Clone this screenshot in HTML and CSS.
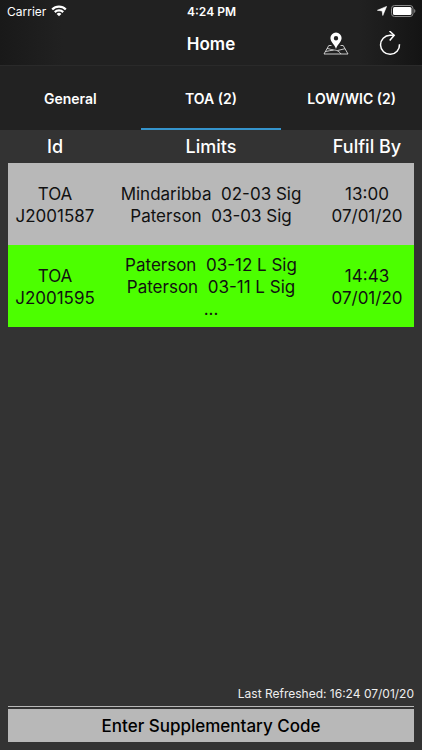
FILE: index.html
```html
<!DOCTYPE html>
<html lang="en">
<head>
    <meta charset="UTF-8">
    <meta name="viewport" content="width=device-width, initial-scale=1.0">
    <title>Home</title>
    <link rel="stylesheet" href="styles.css">
</head>
<body>

<header class="top">
    <div class="status">
        <div class="carrier">
            <span>Carrier</span>
            <svg width="16" height="12" viewBox="0 0 16 12" fill="#fff">
                <path d="M.4 3.7a10.8 10.8 0 0 1 15.2 0L14 5.3a8.6 8.6 0 0 0-12 0z"/>
                <path d="M3 6.3a7.1 7.1 0 0 1 10 0l-1.6 1.6a4.8 4.8 0 0 0-6.8 0z"/>
                <path d="M5.6 8.9a3.4 3.4 0 0 1 4.8 0L8 11.3z"/>
            </svg>
        </div>
        <div class="clock">4:24 PM</div>
        <div class="power">
            <svg width="10" height="10" viewBox="0 0 10 10" fill="#fff" stroke="#fff" stroke-width=".6" stroke-linejoin="round">
                <path d="M9.6.4L5.8 9.5 5.1 4.900.4 4.300z"/>
            </svg>
            <svg width="25" height="12" viewBox="0 0 25 12">
                <rect x=".5" y=".5" width="21.5" height="11" rx="3" fill="none" stroke="#8a8a8a"/>
                <rect x="2" y="2" width="18.5" height="8" rx="1.5" fill="#fff"/>
                <path d="M23.2 4v4c1.6-.6 1.6-3.4 0-4z" fill="#8a8a8a"/>
            </svg>
        </div>
    </div>
    <div class="navbar">
        <h1 class="title">Home</h1>
        <div class="actions">
            <button class="icon-button" aria-label="Map">
                <svg width="26" height="24" viewBox="0 0 26 24">
                    <g fill="none" stroke="#ddd" stroke-width=".9" stroke-linejoin="round">
                        <path d="M8.5 13.5H5.800L1 22h24l-4.800-8.500h-2.700"/>
                        <path d="M4 16.500c3 .2 4 1.400 6.500 1.500s5 .5 7.500 4M2.500 19.500c3-.8 5.500-.8 8-1.500M14.500 18.500l7.500-1.800"/>
                    </g>
                    <path fill="#fff" fill-rule="evenodd" d="M13 .5a5.600 5.600 0 0 0-5.600 5.600c0 3.800 4.200 6.200 5.600 11 1.400-4.800 5.600-7.200 5.600-11A5.600 5.600 0 0 0 13 .5zm0 3.500a2.200 2.200 0 1 1 0 4.400 2.200 2.200 0 0 1 0-4.400z"/>
                </svg>
            </button>
            <button class="icon-button" aria-label="Refresh">
                <svg width="22" height="26" viewBox="0 0 22 26" fill="none" stroke="#fff" stroke-width="1.5">
                    <path d="M20.500 13.200A9.500 9.500 0 1 1 11 4.300h4"/>
                    <path d="M10.500 0l4.700 4.300-4.500 5.200"/>
                </svg>
            </button>
        </div>
    </div>
</header>

<nav class="tabs">
    <button class="tab">General</button>
    <button class="tab active">TOA (2)</button>
    <button class="tab">LOW/WIC (2)</button>
</nav>

<main class="content">
    <table class="list">
        <thead>
            <tr>
                <th class="side">Id</th>
                <th>Limits</th>
                <th class="side">Fulfil By</th>
            </tr>
        </thead>
        <tbody>
            <tr class="pending">
                <td>TOA<br>J2001587</td>
                <td>Mindaribba&nbsp; 02-03 Sig<br>Paterson&nbsp; 03-03 Sig</td>
                <td>13:00<br>07/01/20</td>
            </tr>
            <tr class="issued">
                <td>TOA<br>J2001595</td>
                <td>Paterson&nbsp; 03-12 L Sig<br>Paterson&nbsp; 03-11 L Sig<br>...</td>
                <td>14:43<br>07/01/20</td>
            </tr>
        </tbody>
    </table>
</main>

<footer class="bottom">
    <p class="refreshed">Last Refreshed: 16:24 07/01/20</p>
    <button class="code-button">Enter Supplementary Code</button>
</footer>

</body>
</html>
```
FILE: styles.css
```css
* {
    box-sizing: border-box;
}

body {
    display: flex;
    flex-direction: column;
    min-height: 100vh;
    margin: 0;
    font-family: Inter, "Liberation Sans", sans-serif;
    color: #fff;
    background-color: #333;
}

button {
    padding: 0;
    border: none;
    font-family: inherit;
    color: inherit;
    background: none;
    cursor: pointer;
}

svg {
    display: block;
}

.top {
    background: linear-gradient(to right, #191919, #212121 15%, #212121 85%, #141414);
}

.status {
    display: grid;
    grid-template-columns: 1fr auto 1fr;
    align-items: center;
    height: 22px;
    padding: 0 6px 0 7px;
    font-size: 12px;
}

.carrier {
    display: flex;
    align-items: center;
    gap: 5px;
}

.clock {
    font-weight: 600;
}

.power {
    display: flex;
    align-items: center;
    justify-content: flex-end;
    gap: 4px;
}

.navbar {
    display: grid;
    grid-template-columns: 1fr auto 1fr;
    align-items: center;
    height: 43px;
    padding: 0 21px;
}

.title {
    grid-column: 2;
    margin: 0;
    font-size: 17px;
    font-weight: 600;
}

.actions {
    display: flex;
    align-items: center;
    justify-content: flex-end;
    gap: 30px;
}

.tabs {
    display: grid;
    grid-template-columns: repeat(3, 1fr);
    height: 65px;
    border-top: 1px solid #2a2a2a;
    background-color: #222;
}

.tab {
    padding-top: 2px;
    border-bottom: 2px solid transparent;
    font-size: 14px;
    font-weight: 600;
}

.tab.active {
    border-bottom-color: #3594cc;
}

.content {
    flex: 1;
    padding: 0 8px;
}

.list {
    width: 100%;
    table-layout: fixed;
    border-collapse: collapse;
    font-size: 17px;
    line-height: 22px;
    text-align: center;
}

.list th {
    height: 33px;
    padding: 0;
    font-size: 18px;
    font-weight: 500;
}

.list .side {
    width: 94px;
}

.list td {
    height: 82px;
    padding: 2px 0 0;
    color: #111;
}

.pending {
    background-color: #b8b8b8;
}

.issued {
    background-color: #4cff00;
}

.bottom {
    padding: 0 8px 8px;
}

.refreshed {
    margin: 0 0 2px;
    padding-bottom: 4px;
    border-bottom: 1px solid #b8b8b8;
    font-size: 12px;
    line-height: 16px;
    text-align: right;
    color: #eee;
}

.code-button {
    width: 100%;
    height: 33px;
    font-size: 17px;
    font-weight: 500;
    color: #000;
    background-color: #b8b8b8;
}
```
